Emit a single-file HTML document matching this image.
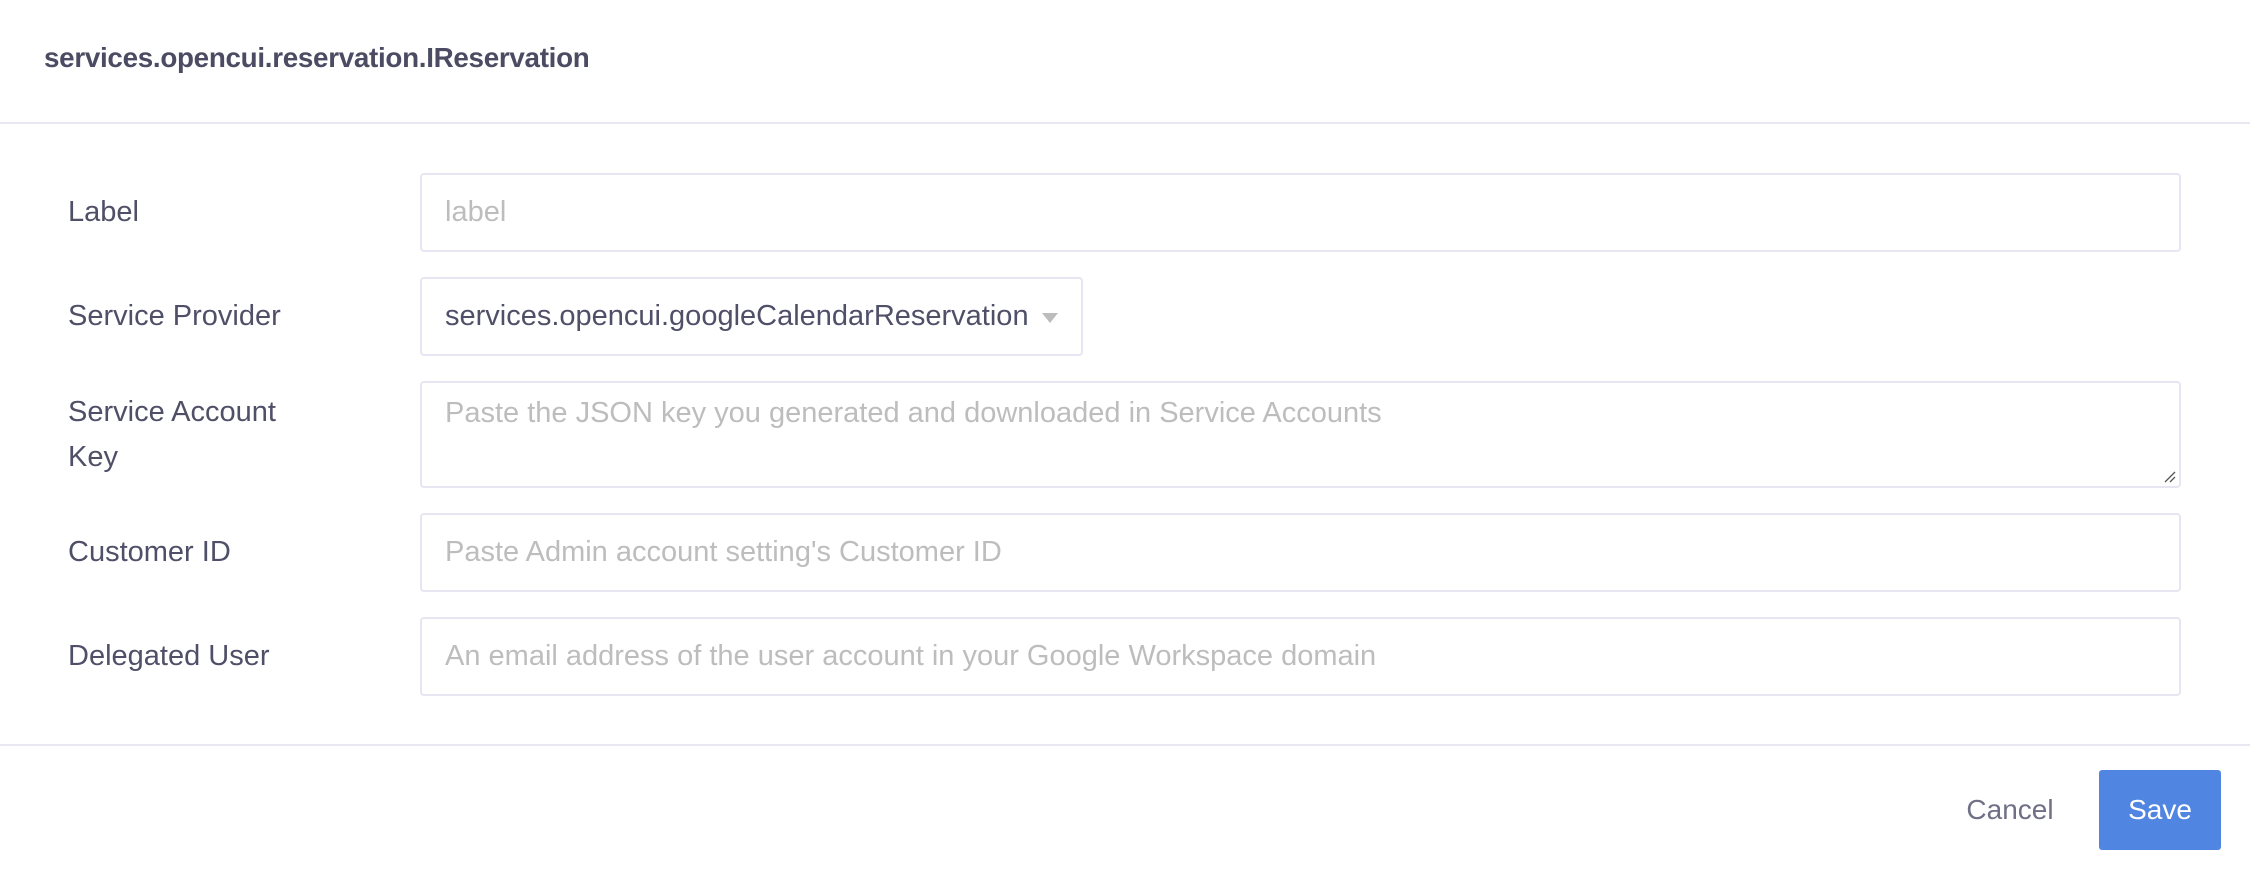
<!DOCTYPE html>
<html><head><meta charset="utf-8"><style>
*{box-sizing:border-box;margin:0;padding:0}
body{width:2250px;height:870px;background:#fff;font-family:"Liberation Sans",sans-serif;position:relative;overflow:hidden}
.t{position:absolute;left:44px;top:42px;font-size:27.8px;font-weight:bold;color:#4b4b63;letter-spacing:-0.3px}
.hr{position:absolute;left:0;width:2250px;height:2px;background:#e8e8f2}
.lab{position:absolute;left:68px;font-size:29px;color:#4f4f68;line-height:45px}
.box{position:absolute;left:420px;width:1761px;border:2px solid #e6e6f2;border-radius:4px;font-size:29px;color:#bdbdbd;padding-left:23px;white-space:nowrap}
.sel{color:#4f4f68}
.arr{position:absolute;left:1042px;top:313px;width:0;height:0;border-left:8px solid transparent;border-right:8px solid transparent;border-top:10px solid #bcbcbc}
.btn{position:absolute;top:770px;height:80px;font-size:28px;text-align:center;line-height:80px;border-radius:3px}
</style></head><body>
<div class="t">services.opencui.reservation.IReservation</div>
<div class="hr" style="top:122px"></div>

<div class="lab" style="top:190px">Label</div>
<div class="box" style="top:173px;height:79px;line-height:75px">label</div>

<div class="lab" style="top:294px">Service Provider</div>
<div class="box sel" style="top:277px;height:79px;width:663px;line-height:75px">services.opencui.googleCalendarReservation</div>
<div class="arr"></div>

<div class="lab" style="top:390px;width:240px">Service Account<br>Key</div>
<div class="box" style="top:381px;height:107px;padding-top:14px;line-height:32px">Paste the JSON key you generated and downloaded in Service Accounts
<svg style="position:absolute;right:2px;bottom:2px" width="14" height="14"><path d="M12 2L2 12M12 7L7 12" stroke="#555" stroke-width="1.3"/></svg></div>

<div class="lab" style="top:530px">Customer ID</div>
<div class="box" style="top:513px;height:79px;line-height:75px">Paste Admin account setting's Customer ID</div>

<div class="lab" style="top:634px">Delegated User</div>
<div class="box" style="top:617px;height:79px;line-height:75px">An email address of the user account in your Google Workspace domain</div>

<div class="hr" style="top:744px"></div>
<div class="btn" style="left:1936px;width:148px;color:#6f6f86">Cancel</div>
<div class="btn" style="left:2099px;width:122px;background:#5185e2;color:#fff">Save</div>
</body></html>
